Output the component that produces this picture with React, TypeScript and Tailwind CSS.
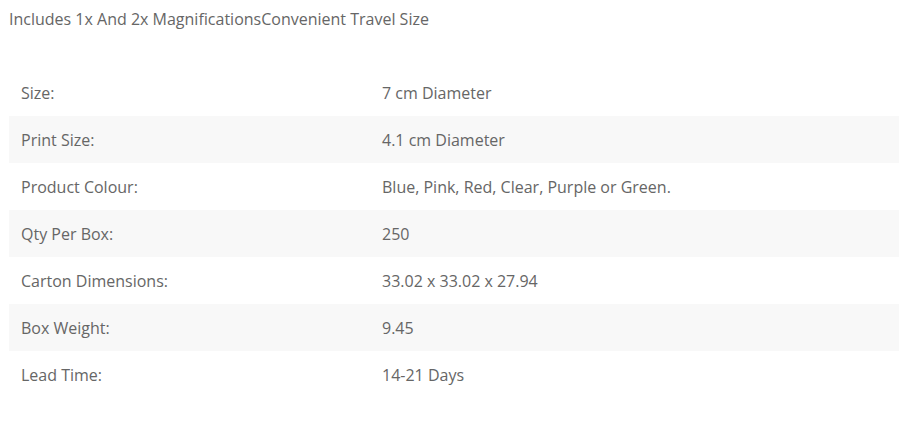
const specs: [string, string][] = [
  ["Size:", "7 cm Diameter"],
  ["Print Size:", "4.1 cm Diameter"],
  ["Product Colour:", "Blue, Pink, Red, Clear, Purple or Green."],
  ["Qty Per Box:", "250"],
  ["Carton Dimensions:", "33.02 x 33.02 x 27.94"],
  ["Box Weight:", "9.45"],
  ["Lead Time:", "14-21 Days"],
];

export default function App() {
  return (
    <div className="w-[910px] h-[430px] bg-white px-[9px] pt-[8px] text-[16px] text-[#666] font-[family-name:'Open_Sans',sans-serif]">
      <p className="leading-[22px]">Includes 1x And 2x MagnificationsConvenient Travel Size</p>
      <table className="mt-[39px] w-[890px] border-collapse">
        <tbody>
          {specs.map(([label, value], i) => (
            <tr key={label} className={i % 2 === 1 ? "bg-[#f8f8f8]" : "bg-white"}>
              <td className="w-[361px] h-[47px] px-3 align-middle">{label}</td>
              <td className="h-[47px] px-3 align-middle">{value}</td>
            </tr>
          ))}
        </tbody>
      </table>
    </div>
  );
}
